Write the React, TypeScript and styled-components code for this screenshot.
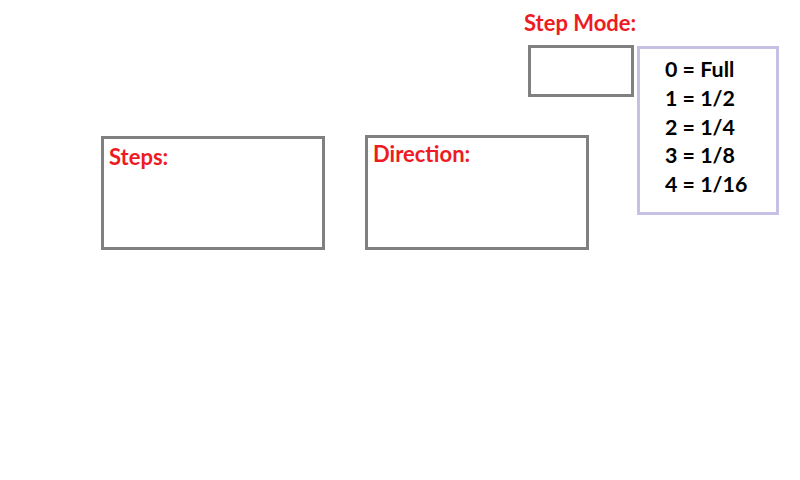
import React from "react";
import styled, { createGlobalStyle } from "styled-components";

const Global = createGlobalStyle`
  html, body { margin: 0; padding: 0; background: #ffffff; }
  body { font-family: Lato, "Open Sans", sans-serif; }
`;

const Canvas = styled.div`
  width: 800px;
  height: 480px;
  display: grid;
  grid-template-columns: 101px 224px 40px 159px 65px 1fr;
  grid-template-rows: 135px 115px 1fr;
  background: #ffffff;
`;

const Label = styled.div`
  font-family: Lato, "Open Sans", sans-serif;
  font-weight: 700;
  font-size: 22px;
  line-height: 26px;
  color: #ed1c24;
  white-space: nowrap;
`;

const Header = styled.div`
  grid-column: 5 / 7;
  grid-row: 1 / 3;
  align-self: start;
  display: flex;
  flex-direction: column;
  padding-top: 10px;
  gap: 9px;
  position: relative;
  z-index: 1;
`;

const HeaderRow = styled.div`
  display: flex;
  align-items: flex-start;
`;

const InputBox = styled.div<{ $col: string; $w: number; $h: number; $top: number; $padTop: number }>`
  grid-column: ${(p) => p.$col};
  grid-row: 2;
  align-self: start;
  margin-top: ${(p) => p.$top}px;
  width: ${(p) => p.$w}px;
  height: ${(p) => p.$h}px;
  box-sizing: border-box;
  border: 3px solid #808080;
  padding: ${(p) => p.$padTop}px 0 0 5px;
  background: #ffffff;
`;

const ModeBox = styled.div`
  margin-left: 4px;
  width: 106px;
  height: 52px;
  box-sizing: border-box;
  border: 3px solid #808080;
`;

const Legend = styled.div`
  margin-left: 3px;
  margin-top: 1px;
  width: 142px;
  height: 169px;
  box-sizing: border-box;
  border: 3px solid #c8c0e4;
  padding: 6px 0 0 25px;
  background: #ffffff;
`;

const LegendLine = styled.div`
  font-family: Lato, "Open Sans", sans-serif;
  font-weight: 700;
  font-size: 21.4px;
  line-height: 28.8px;
  color: #000000;
  white-space: nowrap;
`;

const modes = ["0 = Full", "1 = 1/2", "2 = 1/4", "3 = 1/8", "4 = 1/16"];

export default function App() {
  return (
    <>
      <Global />
      <Canvas>
        <Header>
          <Label>Step Mode:</Label>
          <HeaderRow>
            <ModeBox />
            <Legend>
              {modes.map((m) => (
                <LegendLine key={m}>{m}</LegendLine>
              ))}
            </Legend>
          </HeaderRow>
        </Header>
        <InputBox $col="2" $w={224} $h={114} $top={1} $padTop={5}>
          <Label>Steps:</Label>
        </InputBox>
        <InputBox $col="4 / 6" $w={224} $h={115} $top={0} $padTop={3}>
          <Label>Direction:</Label>
        </InputBox>
      </Canvas>
    </>
  );
}
